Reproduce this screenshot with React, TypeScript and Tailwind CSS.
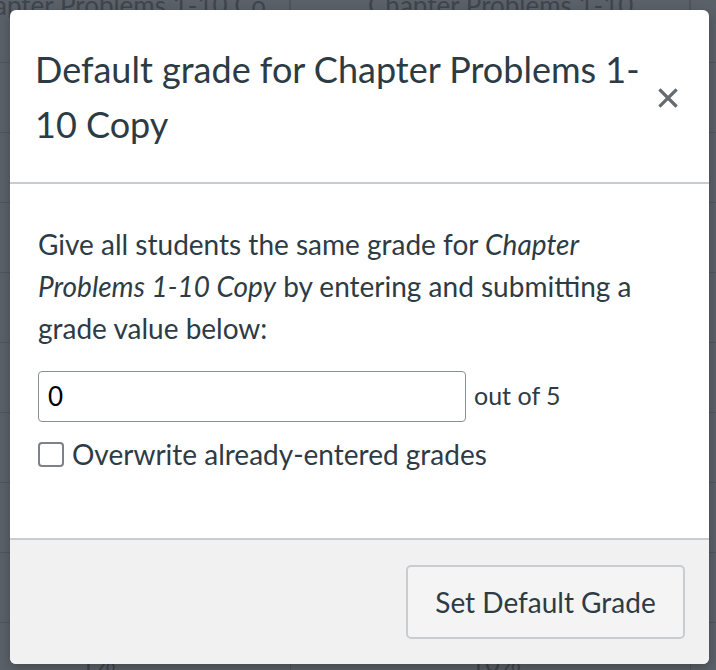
const rowLines = [62, 132, 202, 272, 342, 412, 482, 552, 622];

function Backdrop() {
  return (
    <div className="absolute inset-0 bg-[#5b6169]">
      <div className="flex h-[26px] text-[26px] leading-[26px] text-[#3f454c] -mt-[8px]">
        <div className="w-[290px] shrink-0 border-r border-[#4d535a] whitespace-nowrap overflow-hidden">
          <span className="block -ml-[6px]">apter Problems 1-10 Co</span>
        </div>
        <div className="w-[400px] shrink-0 border-r border-[#4d535a] pl-[78px] whitespace-nowrap">
          Chapter Problems 1-10
        </div>
      </div>
      {rowLines.map((y) => (
        <div
          key={y}
          className="absolute left-0 right-0 h-px bg-[#50565d]"
          style={{ top: y }}
        />
      ))}
      <div className="absolute left-[290px] top-0 bottom-0 w-px bg-[#50565d]" />
      <div className="absolute left-[690px] top-0 bottom-0 w-px bg-[#50565d]" />
      <div className="absolute bottom-[-12px] left-0 right-0 flex text-[26px] text-[#3f454c]">
        <span className="pl-[80px] w-[290px]">1%</span>
        <span className="pl-[180px]">10%</span>
      </div>
    </div>
  );
}

function CloseIcon() {
  return (
    <svg width="20" height="20" viewBox="0 0 20 20" aria-hidden="true">
      <path
        d="M2.5 2.5 L17.5 17.5 M17.5 2.5 L2.5 17.5"
        stroke="#666b70"
        strokeWidth="3.2"
        strokeLinecap="square"
      />
    </svg>
  );
}

export default function App() {
  return (
    <div className="relative h-[670px] w-[716px] overflow-hidden font-['Lato',sans-serif] text-[#2d3b45]">
      <Backdrop />
      <div className="absolute left-[10px] top-[10px] flex h-[654px] w-[699px] flex-col overflow-hidden rounded-[6px] bg-white shadow-[0_4px_12px_rgba(0,0,0,0.25)]">
        <div className="flex h-[174px] shrink-0 items-start justify-between border-b-2 border-[#c7cdd1] pl-[25px] pr-[31px] pt-[32px]">
          <h2 className="w-[615px] text-[36px] leading-[55px] font-normal">
            Default grade for Chapter Problems 1-10 Copy
          </h2>
          <button className="mt-[46px] shrink-0">
            <CloseIcon />
          </button>
        </div>
        <div className="flex flex-1 flex-col px-[28px] pt-[39px]">
          <p className="text-[28px] leading-[42px]">
            Give all students the same grade for <em>Chapter Problems 1-10 Copy</em> by entering and submitting a grade value below:
          </p>
          <div className="mt-[22px] flex items-center gap-[8px]">
            <div className="flex h-[51px] w-[428px] items-center rounded-[4px] border border-[#8b9095] pl-[9px] text-[26px] text-black">
              0
            </div>
            <span className="text-[25px] -mt-[2px]">out of 5</span>
          </div>
          <label className="mt-[15px] flex items-center gap-[8px] text-[28px] leading-[34px]">
            <span className="h-[25px] w-[26px] rounded-[4px] border-2 border-[#7c8287] bg-white" />
            Overwrite already-entered grades
          </label>
        </div>
        <div className="flex h-[126px] shrink-0 items-start justify-end border-t-2 border-[#c7cdd1] bg-[#f1f1f1] pr-[24px] pt-[25px]">
          <button className="h-[74px] w-[279px] rounded-[5px] border-2 border-[#c7cdd1] bg-[#f4f4f4] text-[28px] text-[#2d3b45]">
            Set Default Grade
          </button>
        </div>
      </div>
    </div>
  );
}
